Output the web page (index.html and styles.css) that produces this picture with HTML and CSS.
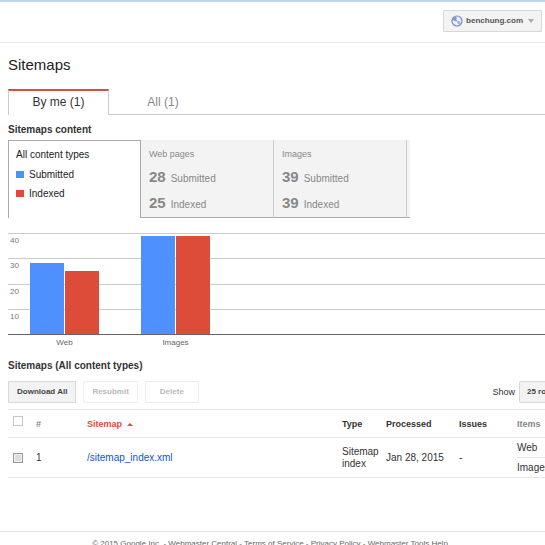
FILE: index.html
```
<!DOCTYPE html>
<html lang="en">
<head>
<meta charset="utf-8">
<title>Sitemaps</title>
<link rel="stylesheet" href="styles.css">
</head>
<body>
<header class="topbar">
  <button class="btn site-picker" type="button">
    <svg class="globe" viewBox="0 0 12 12" aria-hidden="true">
      <circle cx="6" cy="6" r="5" fill="#f1f4fb" stroke="#7189c4" stroke-width="1.2"/>
      <path d="M2.200 3.500 4.500 1.800 6 2.800 5.200 4.500 6.500 5.500 5.500 6.500 3.500 6 2 5z" fill="#849acd"/>
      <path d="M6.500 6 8.500 6 9.500 7.500 8.500 9.500 7 9 6.200 7.500z" fill="#a0b2dd"/>
    </svg>
    <span>benchung.com</span>
    <svg class="caret" viewBox="0 0 6 4" aria-hidden="true"><path d="M0 0h6L3 4z" fill="#aaa"/></svg>
  </button>
</header>
<main class="page">
  <h1 class="title">Sitemaps</h1>
  <nav class="tabs">
    <a class="tab tab-active" href="#me">By me (1)</a>
    <a class="tab" href="#all">All (1)</a>
  </nav>

  <h2 class="section-title">Sitemaps content</h2>
  <div class="cards">
    <section class="card card-active">
      <div class="legend-title">All content types</div>
      <div class="legend"><span class="swatch blue"></span>Submitted</div>
      <div class="legend"><span class="swatch red"></span>Indexed</div>
    </section>
    <section class="card">
      <div class="card-title">Web pages</div>
      <div class="stat"><b>28</b>Submitted</div>
      <div class="stat"><b>25</b>Indexed</div>
    </section>
    <section class="card">
      <div class="card-title">Images</div>
      <div class="stat"><b>39</b>Submitted</div>
      <div class="stat"><b>39</b>Indexed</div>
    </section>
    <div class="card-end"></div>
  </div>

  <div class="chart">
    <div class="gridlines"><span>40</span><span>30</span><span>20</span><span>10</span></div>
    <div class="bars">
      <div class="group"><div class="bar blue" style="height:70%"></div><div class="bar red" style="height:62.5%"></div></div>
      <div class="group"><div class="bar blue" style="height:97.5%"></div><div class="bar red" style="height:97.5%"></div></div>
    </div>
  </div>
  <div class="axis"><span>Web</span><span>Images</span></div>

  <h2 class="section-title list-title">Sitemaps (All content types)</h2>
  <div class="toolbar">
    <button class="btn" type="button">Download All</button>
    <button class="btn" type="button" disabled>Resubmit</button>
    <button class="btn" type="button" disabled>Delete</button>
    <label class="show" for="rows">Show</label>
    <select class="btn rows" id="rows"><option>25 rows</option></select>
  </div>

  <table class="list">
    <colgroup><col class="c-check"><col class="c-num"><col><col class="c-type"><col class="c-date"><col class="c-issues"><col class="c-items"></colgroup>
    <thead>
      <tr>
        <th class="check-head"><input type="checkbox" aria-label="Select all"></th>
        <th class="muted">#</th>
        <th class="sorted">Sitemap <svg class="sort" viewBox="0 0 6 3" aria-hidden="true"><path d="M0 3h6L3 0z" fill="#dd4b39"/></svg></th>
        <th>Type</th><th>Processed</th><th>Issues</th><th class="muted">Items</th>
      </tr>
    </thead>
    <tbody>
      <tr>
        <td rowspan="2"><input class="row-check" type="checkbox" aria-label="Select /sitemap_index.xml"></td>
        <td rowspan="2">1</td>
        <td rowspan="2"><a href="#sitemap">/sitemap_index.xml</a></td>
        <td rowspan="2">Sitemap index</td>
        <td rowspan="2">Jan 28, 2015</td>
        <td rowspan="2">-</td>
        <td class="item">Web</td>
      </tr>
      <tr><td class="item">Images</td></tr>
    </tbody>
  </table>
</main>
<footer class="footer">
  © 2015 Google Inc. - <a href="#central">Webmaster Central</a> - <a href="#terms">Terms of Service</a> - <a href="#privacy">Privacy Policy</a> - <a href="#help">Webmaster Tools Help</a>
</footer>
</body>
</html>
```
FILE: styles.css
```
* { box-sizing: border-box; }
html { overflow: hidden; }
body {
  margin: 0;
  overflow: hidden;
  background: #fff;
  color: #333;
  font: 10px/12px "Liberation Sans", Arial, sans-serif;
}
a { color: #15c; text-decoration: none; }

.topbar {
  display: flex;
  justify-content: flex-end;
  height: 43px;
  padding: 8px 3px 0 8px;
  border-top: 2px solid #bdd3ee;
  border-bottom: 1px solid #ebebeb;
}
.btn {
  min-width: 54px;
  height: 22px;
  padding: 0 8px;
  border: 1px solid #d8d8d8;
  border-radius: 1px;
  background: #f3f3f3;
  color: #444;
  font: bold 8px/12px "Liberation Sans", Arial, sans-serif;
  white-space: nowrap;
}
.btn:disabled { border-color: #eee; background: #fff; color: #b8b8b8; }
.site-picker { display: flex; align-items: center; gap: 3px; padding: 0 7px; color: #555; }
.globe { width: 12px; height: 12px; }
.caret { width: 6px; height: 4px; margin-left: 2px; }

.page { margin: 0 -32px 0 8px; }
.title {
  margin: 12px 0 15px;
  color: #222;
  font-size: 15px;
  font-weight: normal;
  line-height: 19px;
}
.tabs { display: flex; height: 26px; border-bottom: 1px solid #ccc; }
.tab {
  width: 101px;
  height: 26px;
  padding-top: 4px;
  border-top: 2px solid transparent;
  color: #888;
  font-size: 12px;
  line-height: 14px;
  text-align: center;
}
.tab:not(.tab-active) { width: 108px; }
.tab-active {
  border: 1px solid #ccc;
  border-top: 2px solid #d2523f;
  border-bottom: 0;
  background: #fff;
  color: #333;
}
.section-title { margin: 9px 0 4px; font-size: 10px; line-height: 12px; }

.cards { display: flex; height: 78px; }
.card {
  width: 133px;
  padding: 7px 7px 0 8px;
  border-right: 1px solid #ccc;
  border-bottom: 1px solid #aaa;
  background: #f3f3f3;
  color: #888;
}
.card-active {
  padding-left: 7px;
  border: 1px solid #aaa;
  border-bottom: 0;
  background: #fff;
  color: #222;
}
.card-end { width: 3px; border-bottom: 1px solid #aaa; background: #f3f3f3; }
.legend-title { margin-bottom: 3px; line-height: 14px; }
.legend { display: flex; align-items: center; gap: 5px; height: 19px; }
.swatch { width: 8px; height: 7px; }
.blue { background: #4d90fe; }
.red { background: #dd4b39; }
.card-title { margin-bottom: 3px; font-size: 9px; line-height: 14px; }
.stat { display: flex; align-items: baseline; gap: 5px; height: 26px; line-height: 26px; }
.stat b { font-size: 15px; }

/* Grid lines and bars share one grid cell. */
.chart {
  display: grid;
  height: 102px;
  margin-top: 15px;
  border-bottom: 1px solid #666;
}
.gridlines, .bars { grid-area: 1 / 1; height: 101px; }
.gridlines { display: grid; grid-template-rows: repeat(4, 1fr); }
.gridlines span {
  padding: 1px 2px;
  border-top: 1px solid #ccc;
  color: #777;
  font-size: 8px;
  line-height: 11px;
}
.bars { display: flex; gap: 42px; padding-left: 22px; z-index: 1; }
.group { display: flex; align-items: flex-end; gap: 1px; }
.bar { width: 34px; }
.axis { display: flex; gap: 42px; padding-left: 22px; color: #666; font-size: 8px; line-height: 16px; }
.axis span { width: 69px; text-align: center; }

.list-title { margin: 9px 0; }
.toolbar { display: flex; align-items: center; gap: 7px; }
.show { margin-left: auto; margin-right: -3px; font-size: 9px; }
.rows { width: 58px; padding: 0 7px; appearance: none; }

.list {
  width: 100%;
  margin-top: 6px;
  border-collapse: collapse;
  table-layout: fixed;
  border-bottom: 1px solid #e5e5e5;
}
.c-check { width: 28px; }
.c-num { width: 51px; }
.c-type { width: 44px; }
.c-date { width: 73px; }
.c-issues { width: 58px; }
.c-items { width: 60px; }
.list th, .list td { padding: 0; text-align: left; }
.list th {
  height: 28px;
  border-top: 1px solid #e5e5e5;
  border-bottom: 1px solid #e5e5e5;
  font-size: 9px;
}
.list .muted { color: #888; }
.list .sorted { color: #dd4b39; }
.list .check-head { padding-bottom: 5px; }
.sort { width: 6px; height: 3px; margin-left: 2px; vertical-align: middle; }
.list .item { height: 20px; border-top: 1px solid #e5e5e5; }
.list input {
  display: block;
  width: 10px;
  height: 10px;
  margin: 0 0 0 5px;
  appearance: none;
  border: 1px solid #c6c6c6;
  background: #fff;
}
.list .row-check { border-color: #999; background: #ddd; box-shadow: inset 0 0 0 1px #f3f3f3; }

.footer {
  margin-top: 53px;
  padding: 6px 5px 0 0;
  border-top: 1px solid #e5e5e5;
  color: #666;
  font-size: 8px;
  text-align: center;
}
.footer a { color: inherit; }
```
